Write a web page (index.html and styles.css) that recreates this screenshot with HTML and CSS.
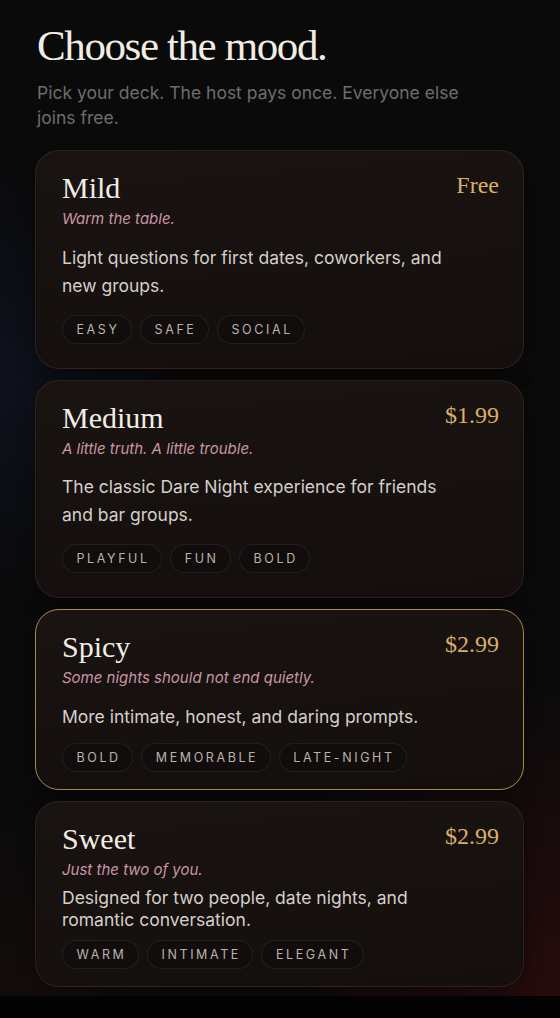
FILE: index.html
```html
<!DOCTYPE html>
<html lang="en">
<head>
<meta charset="utf-8">
<meta name="viewport" content="width=device-width, initial-scale=1">
<title>Choose the mood</title>
<link rel="stylesheet" href="styles.css">
</head>
<body>
<main class="page">
  <header class="intro">
    <h1 class="intro__title">Choose the mood.</h1>
    <p class="intro__sub">Pick your deck. The host pays once. Everyone else joins free.</p>
  </header>

  <section class="decks">
    <article class="card">
      <div class="card__head">
        <h2 class="card__name">Mild</h2>
        <span class="card__price">Free</span>
      </div>
      <p class="card__tagline">Warm the table.</p>
      <p class="card__desc">Light questions for first dates, coworkers, and new groups.</p>
      <ul class="tags">
        <li class="tag">Easy</li>
        <li class="tag">Safe</li>
        <li class="tag">Social</li>
      </ul>
    </article>

    <article class="card">
      <div class="card__head">
        <h2 class="card__name">Medium</h2>
        <span class="card__price">$1.99</span>
      </div>
      <p class="card__tagline">A little truth. A little trouble.</p>
      <p class="card__desc">The classic Dare Night experience for friends and bar groups.</p>
      <ul class="tags">
        <li class="tag">Playful</li>
        <li class="tag">Fun</li>
        <li class="tag">Bold</li>
      </ul>
    </article>

    <article class="card card--featured card--compact">
      <div class="card__head">
        <h2 class="card__name">Spicy</h2>
        <span class="card__price">$2.99</span>
      </div>
      <p class="card__tagline">Some nights should not end quietly.</p>
      <p class="card__desc">More intimate, honest, and daring prompts.</p>
      <ul class="tags">
        <li class="tag">Bold</li>
        <li class="tag">Memorable</li>
        <li class="tag">Late-night</li>
      </ul>
    </article>

    <article class="card card--compact card--snug">
      <div class="card__head">
        <h2 class="card__name">Sweet</h2>
        <span class="card__price">$2.99</span>
      </div>
      <p class="card__tagline">Just the two of you.</p>
      <p class="card__desc">Designed for two people, date nights, and romantic conversation.</p>
      <ul class="tags">
        <li class="tag">Warm</li>
        <li class="tag">Intimate</li>
        <li class="tag">Elegant</li>
      </ul>
    </article>
  </section>
</main>
</body>
</html>
```

FILE: styles.css
```css
html {
  background: #030303;
}

body {
  margin: 0;
  font-family: Inter, "Noto Sans", "Liberation Sans", sans-serif;
  color: #d5cfca;
}

.page {
  box-sizing: border-box;
  padding: 21px 36px 9px 35px;
  background:
    radial-gradient(ellipse 45% 30% at 0% 38%, rgba(24, 34, 70, 0.3), transparent 72%),
    radial-gradient(ellipse 80% 45% at 100% 100%, rgba(78, 14, 14, 0.42), transparent 72%),
    radial-gradient(ellipse 60% 30% at 10% 100%, rgba(30, 14, 12, 0.5), transparent 70%),
    #0a0a0b;
}

.intro {
  padding-left: 2px;
}

.intro__title {
  margin: 0;
  font-family: "Liberation Serif", "Times New Roman", serif;
  font-weight: 400;
  font-size: 43px;
  line-height: 50px;
  letter-spacing: -1.4px;
  color: #f2ede3;
}

.intro__sub {
  margin: 9px 0 0;
  max-width: 445px;
  font-size: 17.5px;
  line-height: 25px;
  color: #6f6c6b;
}

.decks {
  margin-top: 20px;
  display: flex;
  flex-direction: column;
  gap: 11px;
}

.card {
  border: 1px solid rgba(196, 156, 112, 0.13);
  border-radius: 24px;
  padding: 20px 24px 24px 26px;
  background: linear-gradient(175deg, #191311 0%, #140f0e 100%);
  box-shadow: 0 6px 18px rgba(0, 0, 0, 0.35);
}

.card--featured {
  border-color: #a9874f;
}

.card--compact {
  padding-bottom: 17px;
}

.card__head {
  display: flex;
  justify-content: space-between;
  align-items: flex-start;
}

.card__name {
  margin: 0;
  font-family: "Liberation Serif", "Times New Roman", serif;
  font-weight: 400;
  font-size: 30px;
  line-height: 34px;
  color: #f2ede3;
}

.card__price {
  font-family: "Liberation Serif", "Times New Roman", serif;
  font-size: 24px;
  line-height: 34px;
  color: #d9af66;
  margin-top: -3px;
}

.card__tagline {
  margin: 4px 0 0;
  font-size: 15px;
  line-height: 20px;
  font-style: italic;
  color: #c896a7;
}

.card__desc {
  margin: 14.5px 0 0;
  max-width: 395px;
  font-size: 17.5px;
  line-height: 28px;
  color: #d5cfca;
}

.card--snug .card__desc {
  margin-top: 7px;
  line-height: 22px;
}

.tags {
  list-style: none;
  margin: 15px 0 0;
  padding: 0;
  display: flex;
  gap: 8px;
}

.card--compact .tags {
  margin-top: 12px;
}

.card--snug .tags {
  margin-top: 9px;
}

.tag {
  padding: 0 11.5px 0 13.5px;
  border: 1px solid rgba(255, 255, 255, 0.07);
  border-radius: 999px;
  background: rgba(0, 0, 0, 0.16);
  font-size: 12.5px;
  line-height: 27px;
  letter-spacing: 2.6px;
  text-transform: uppercase;
  color: #bab2ab;
}
```
